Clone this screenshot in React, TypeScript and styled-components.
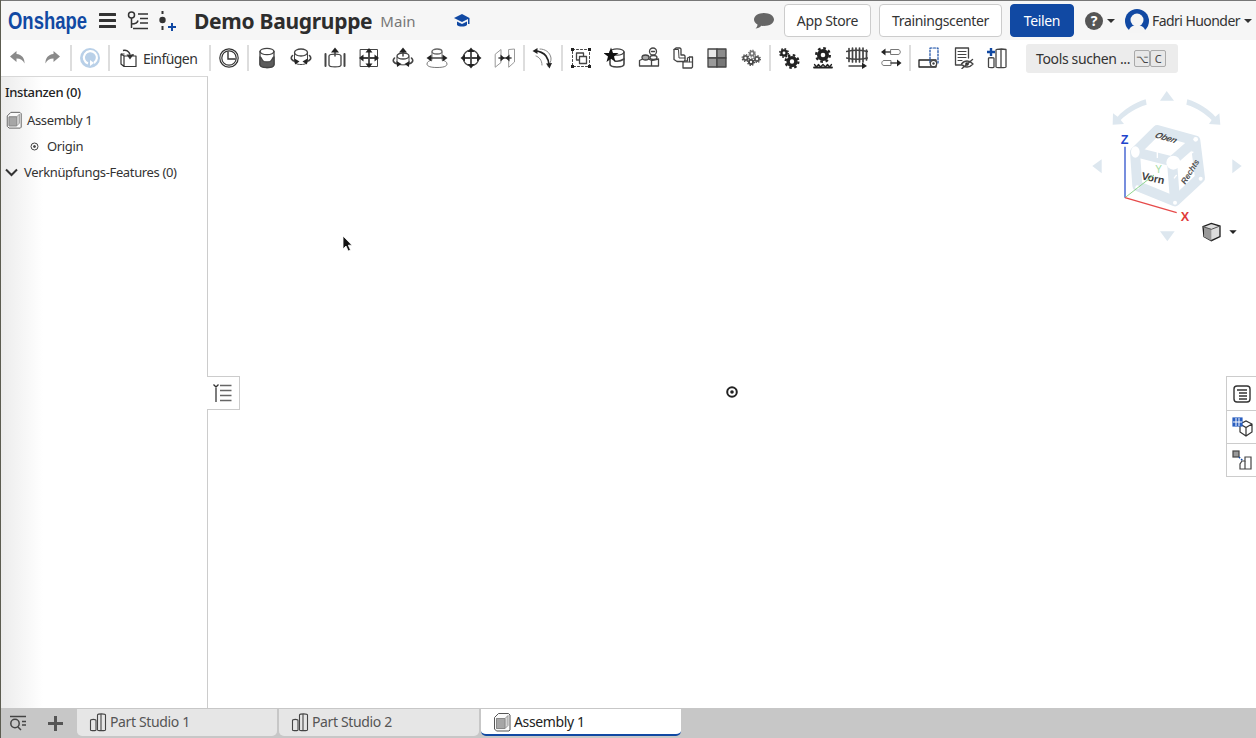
import type { ReactNode } from 'react'
import styled, { createGlobalStyle } from 'styled-components'

const BLUE = '#1149a3'
const INK = '#444'

const GlobalStyle = createGlobalStyle`
  html, body {
    margin: 0;
    padding: 0;
    height: 100%;
    overflow: hidden;
    background: #fff;
    font-family: "Noto Sans", "Open Sans", sans-serif;
    letter-spacing: -0.36px;
    color: #333;
  }
  #root { height: 100%; }
`

const Icon = ({ children }: { children: ReactNode }) => (
  <svg
    width={22}
    height={22}
    viewBox="0 0 22 22"
    fill="none"
    stroke={INK}
    strokeWidth={1.3}
    strokeLinecap="round"
    strokeLinejoin="round"
  >
    {children}
  </svg>
)

const Arrow = ({ d, tip }: { d: string; tip: string }) => (
  <>
    <path d={d} strokeWidth={1.5} />
    <polygon points={tip} fill="#222" stroke="none" />
  </>
)

// teeth are a dashed ring around a thick body ring
const Gear = ({ x, y, r, color = '#222' }: { x: number; y: number; r: number; color?: string }) => {
  const toothRadius = r * 0.85
  const dash = (2 * Math.PI * toothRadius) / 16
  return (
    <>
      <circle cx={x} cy={y} r={toothRadius} stroke={color} strokeWidth={r * 0.3} strokeLinecap="butt" strokeDasharray={`${dash} ${dash}`} />
      <circle cx={x} cy={y} r={r * 0.52} stroke={color} strokeWidth={r * 0.46} />
    </>
  )
}

const PartStudioIcon = () => (
  <svg width="20" height="20" viewBox="0 0 20 20" fill="none" stroke="#444" strokeWidth="1.1">
    <path d="M2.500 8.500c0-1.500 5.500-1.500 5.500 0V18c0 1-5.500 1-5.500 0z" />
    <path d="M9.500 3c0-1.500 8-1.500 8 0V18c0 1-8 1-8 0z" />
    <path d="M13 2v17" />
  </svg>
)

const AssemblyIcon = () => (
  <svg width="20" height="20" viewBox="0 0 20 20" fill="none" stroke="#555" strokeWidth="1">
    <path d="M2.500 5.500 6.500 1.500h10l1.500 1.500v15l-1 1H4.500l-2-2z" fill="#fafafa" />
    <path d="M4.500 6.500h8.500l3-3v10l-3 3H4.500z" fill="#d4d4d4" stroke="#999" />
    <path d="M4.500 6.500h8.500v10H4.500z" fill="#a6a6a6" stroke="#888" />
  </svg>
)

const tools: Record<string, ReactNode> = {
  fastened: (
    <Icon>
      <ellipse cx="11" cy="4.500" rx="7" ry="3.200" />
      <path d="M4 4.500v13c0 4 14 4 14 0v-13" />
      <path d="M4 10c2 .5 1.500 3.500 4 4.500 2 .6 4 .6 6 0 2.500-1 2-4 4-4.500v7.500c0 4-14 4-14 0z" fill="#5c5c5c" />
    </Icon>
  ),
  revolute: (
    <Icon>
      <ellipse cx="11" cy="5.500" rx="6.500" ry="3.500" />
      <path d="M4.500 6v8c0 2 2 3.500 6.500 3.500s6.500-1.500 6.500-3.500V6" strokeWidth="1" />
      <path d="M6 14.500C1.500 14 0 11 2.500 8.500M16 14.500c4.500-.5 6-3.500 3.500-6" strokeWidth="1.600" />
      <polygon points="4.500,11.500 9.500,14.500 5,17.500" fill="#222" stroke="none" />
      <polygon points="17.500,11.500 12.500,14.500 17,17.500" fill="#222" stroke="none" />
    </Icon>
  ),
  slider: (
    <Icon>
      <path d="M5 9c0-2.500 12-2.500 12 0v9c0 2.500-12 2.500-12 0z" />
      <Arrow d="M11 9V4" tip="11,0.500 7,5.500 15,5.500" />
      <path d="M1.500 7v12M20.500 7v12" strokeWidth="2" />
    </Icon>
  ),
  planar: (
    <Icon>
      <rect x="2.500" y="2.500" width="17" height="17" strokeWidth="1" />
      <path d="M11 4v14M4 11h14" strokeWidth="1.800" />
      <polygon points="11,1 7.500,5.500 14.500,5.500" fill="#222" stroke="none" />
      <polygon points="11,21 7.500,16.500 14.500,16.500" fill="#222" stroke="none" />
      <polygon points="1,11 5.500,7.500 5.500,14.500" fill="#222" stroke="none" />
      <polygon points="21,11 16.500,7.500 16.500,14.500" fill="#222" stroke="none" />
    </Icon>
  ),
  cylindrical: (
    <Icon>
      <ellipse cx="11" cy="9" rx="6" ry="3" />
      <path d="M5 10v6c0 2.500 12 2.500 12 0v-6" strokeWidth="1" />
      <Arrow d="M11 9V4" tip="11,0.500 7,5.500 15,5.500" />
      <path d="M6 17C1.500 16.500 0 13.500 2.500 11M16 17c4.500-.5 6-3.500 3.500-6" strokeWidth="1.600" />
      <polygon points="4.500,14 9.500,17 5,20" fill="#222" stroke="none" />
      <polygon points="17.500,14 12.500,17 17,20" fill="#222" stroke="none" />
    </Icon>
  ),
  pinSlot: (
    <Icon>
      <ellipse cx="11" cy="4.500" rx="5" ry="2.500" stroke="#666" />
      <path d="M6 5v7M16 5v7M6 13c-3 .5-5 2-5 4 0 2.500 4 3.500 10 3.500s10-1 10-3.500c0-2-2-3.500-5-4" strokeWidth="1" stroke="#777" />
      <Arrow d="M4 11h14" tip="0.500,11 5.500,7.500 5.500,14.500" />
      <polygon points="21.500,11 16.500,7.500 16.500,14.500" fill="#222" stroke="none" />
    </Icon>
  ),
  ball: (
    <Icon>
      <circle cx="11" cy="11" r="7.800" />
      <path d="M11 3v16M3 11h16" strokeWidth="1.800" />
      <polygon points="11,0.500 7.500,5 14.500,5" fill="#222" stroke="none" />
      <polygon points="11,21.500 7.500,17 14.500,17" fill="#222" stroke="none" />
      <polygon points="0.500,11 5,7.500 5,14.500" fill="#222" stroke="none" />
      <polygon points="21.500,11 17,7.500 17,14.500" fill="#222" stroke="none" />
    </Icon>
  ),
  parallel: (
    <Icon>
      <path d="M1.500 7 7 2.500v13L1.500 20zM15 2.500 20.500 2v13L15 20z" stroke="#999" strokeWidth="1" />
      <path d="M5 11h12" strokeWidth="1.600" />
      <polygon points="10.500,11 6.500,7.500 6.500,14.500" fill="#222" stroke="none" />
      <polygon points="11.500,11 15.500,7.500 15.500,14.500" fill="#222" stroke="none" />
    </Icon>
  ),
  tangent: (
    <Icon>
      <path d="M8 2c5 0 10 3 11 9 .3 3-1 6-3 8" stroke="#888" strokeWidth="1" />
      <path d="M4 9c3 1 6 4 6 9" stroke="#888" strokeWidth="1" />
      <path d="M3 4c4 0 9 2 11 5M14 9c2 3 3 6 3 9" strokeWidth="1.700" stroke="#222" />
      <polygon points="0.500,4 5.500,1 5.500,7" fill="#222" stroke="none" />
      <polygon points="17.500,21.500 14,16.500 20,16" fill="#222" stroke="none" />
    </Icon>
  ),
  group: (
    <Icon>
      <rect x="2.500" y="2.500" width="17" height="17" strokeDasharray="2 2" strokeWidth="1" />
      <rect x="6.500" y="6" width="7" height="7" />
      <rect x="9.500" y="9.500" width="7" height="7" fill="#fff" />
      <g fill="#222" stroke="none">
        <rect x="1" y="1" width="3" height="3" />
        <rect x="18" y="1" width="3" height="3" />
        <rect x="1" y="18" width="3" height="3" />
        <rect x="18" y="18" width="3" height="3" />
      </g>
    </Icon>
  ),
  replicate: (
    <Icon>
      <ellipse cx="13" cy="5" rx="7" ry="3.200" />
      <path d="M6 8v9c0 4 14 4 14 0V5" strokeWidth="1.600" />
      <path d="M11 14c3 .5 6 0 9-2" strokeWidth="1.600" />
      <polygon points="7,0.500 9,6 14.500,6 10,9.500 11.500,15 7,11.800 2.500,15 4,9.500 -0.500,6 5,6" fill="#111" stroke="none" />
    </Icon>
  ),
  blocks: (
    <Icon>
      <circle cx="15" cy="4.500" r="3.500" />
      <path d="M13.500 4.500h3" />
      <path d="M1.500 13.500 8 10.500l5.500 3V19H1.500zM13.500 13.500l7-1.500V19h-7z" />
      <ellipse cx="7.500" cy="10.500" rx="3.500" ry="2.500" fill="#aaa" />
      <ellipse cx="15.500" cy="10.500" rx="3.500" ry="2" fill="#fff" />
    </Icon>
  ),
  lshapes: (
    <Icon>
      <path d="M2 2.500 4 1h4l1 1v6h3l1 1v4l-1 1.500H5l-3-2z" />
      <path d="M2 2.500h4.500l.5 8.500h6" strokeWidth="1" />
      <path d="M11 15l2-1h2.500v-3l2-1h3v10l-1 1H11z" fill="#fff" />
      <path d="M11 15h6.500v-5M17.500 15l3 0" strokeWidth="1" />
    </Icon>
  ),
  grid: (
    <Icon>
      <rect x="2" y="2" width="9" height="9" fill="#e8e8e8" />
      <rect x="11" y="2" width="9" height="9" fill="#8c8c8c" />
      <rect x="2" y="11" width="9" height="9" fill="#9a9a9a" />
      <rect x="11" y="11" width="9" height="9" fill="#777" />
    </Icon>
  ),
  cluster: (
    <Icon>
      <Gear x={5.500} y={11} r={4} color="#555" />
      <Gear x={12} y={6.500} r={4} color="#777" />
      <Gear x={17} y={12} r={4} color="#555" />
      <Gear x={11} y={15} r={4} color="#444" />
    </Icon>
  ),
  gears: (
    <Icon>
      <Gear x={6} y={6} r={5} />
      <Gear x={14} y={14.500} r={7.500} />
    </Icon>
  ),
  gearFloor: (
    <Icon>
      <Gear x={11} y={8} r={8} />
      <path d="M2 20.500h18" strokeWidth="1.800" stroke="#222" />
      <path d="M2.500 17.500l2 2.500 2-2.500 2 2.500 2.500-2.500 2.500 2.500 2-2.500 2 2.500 2-2.500" strokeWidth="1.300" stroke="#222" />
    </Icon>
  ),
  rack: (
    <Icon>
      <path d="M3 1.500v13M6.500 1v14M10 1v14M13.500 1v14M17 1v14M20.500 3v10" strokeWidth="1.700" />
      <path d="M.5 4.500c6-1.500 15-1.500 21 0M.5 11c6 1.500 15 1.500 21 0" strokeWidth="1.500" />
      <Arrow d="M3 19h14" tip="21,19 16,15.500 16,22" />
    </Icon>
  ),
  pistons: (
    <Icon>
      <path d="M11 2.500h7c3 0 3 5 0 5h-7z" stroke="#777" strokeWidth="1" />
      <path d="M4 13.500h7v5H4c-3 0-3-5 0-5z" stroke="#777" strokeWidth="1" />
      <Arrow d="M4 5h6" tip="1,5 5.500,1.500 5.500,8.500" />
      <Arrow d="M11 16h7" tip="21.500,16 17,12.500 17,19.500" />
    </Icon>
  ),
  offset: (
    <Icon>
      <rect x="1" y="13" width="17" height="7" stroke="#222" />
      <rect x="12" y="1" width="8" height="15" stroke={BLUE} strokeDasharray="2 1.500" strokeWidth="1.200" />
      <circle cx="15.500" cy="16.500" r="3.200" fill="#fff" stroke="#444" />
      <circle cx="15.500" cy="16.500" r="1.200" fill="#444" stroke="none" />
    </Icon>
  ),
  docEye: (
    <Icon>
      <path d="M3.500 1h13v10M3.500 1v17h6" />
      <path d="M6 4.500h8M6 7.500h8M6 10.500h8M6 13.500h4" strokeWidth="1" />
      <path d="M9.500 17c3-4 8-4 11.500 0-3.500 4-8.500 4-11.500 0z" fill="#fff" />
      <circle cx="15" cy="17" r="1.800" fill="#222" stroke="none" />
      <path d="M10 21.500 20.500 12.500" strokeWidth="1.400" />
    </Icon>
  ),
  newStudio: (
    <Icon>
      <path d="M5 1v8M1 5h8" stroke={BLUE} strokeWidth="2.400" strokeLinecap="butt" />
      <path d="M2.500 11.500c0-1 5.500-1 5.500 0V20c0 .8-5.500.8-5.500 0zM10 3c0-1 4.500-1 5.500-1l4.500.5V20c0 .8-10 .8-10 0zM15 2.500V20" />
    </Icon>
  ),
}

const toolGroups = [
  ['fastened', 'revolute', 'slider', 'planar', 'cylindrical', 'pinSlot', 'ball', 'parallel'],
  ['tangent'],
  ['group', 'replicate', 'blocks', 'lshapes', 'grid', 'cluster'],
  ['gears', 'gearFloor', 'rack', 'pistons'],
  ['offset', 'docEye', 'newStudio'],
]

const tabs = [
  { name: 'Part Studio 1', active: false },
  { name: 'Part Studio 2', active: false },
  { name: 'Assembly 1', active: true },
]

export default function App() {
  return (
    <>
      <GlobalStyle />
      <Page>
        <TopBar>
          <LogoSlot>
            <Logo>Onshape</Logo>
          </LogoSlot>
          <IconSlot $width={28}>
            <svg width="17" height="15" viewBox="0 0 17 15" fill="#333">
              <rect width="17" height="3" rx="0.500" />
              <rect y="6" width="17" height="3" rx="0.500" />
              <rect y="12" width="17" height="3" rx="0.500" />
            </svg>
          </IconSlot>
          <IconSlot $width={33}>
            <svg width="22" height="20" viewBox="0 0 22 20" fill="none" stroke="#333" strokeWidth="1.500">
              <circle cx="4.500" cy="4" r="3" />
              <path d="M4.500 7v10M4.500 13c4 0 6-1 6.500-3.500" />
              <path d="M11 3h10M13 7.500h8M13 12h8M6 17.500h15" />
            </svg>
          </IconSlot>
          <IconSlot $width={26}>
            <svg width="20" height="20" viewBox="0 0 20 20" fill="#333">
              <rect x="4.500" y="0" width="2" height="3" />
              <circle cx="5.500" cy="9" r="3.200" />
              <rect x="4.500" y="15" width="2" height="4" />
              <path d="M11 15h3v-3h2v3h3v2h-3v3h-2v-3h-3z" fill={BLUE} />
            </svg>
          </IconSlot>
          <Title>Demo Baugruppe</Title>
          <Branch>Main</Branch>
          <IconSlot $width={16} $left={38}>
            <svg width="16" height="14" viewBox="0 0 16 14" fill={BLUE}>
              <path d="M8 0 0 4l8 4 6-3v5h1.500V4z" />
              <path d="M3 7.500V11c2 2 8 2 10 0V7.500L8 10z" />
            </svg>
          </IconSlot>
          <RightGroup>
            <ChatIcon width="20" height="16" viewBox="0 0 20 16" fill="#666">
              <path d="M10 0c5.500 0 10 2.800 10 6.500S15.500 13 10 13c-1 0-2-.1-2.800-.3C6 14.500 3.500 15.500 1.500 15.500c1.200-1 2-2.300 2-4C1.300 10.300 0 8.500 0 6.500 0 2.800 4.500 0 10 0z" />
            </ChatIcon>
            <HeaderButton>App Store</HeaderButton>
            <HeaderButton>Trainingscenter</HeaderButton>
            <ShareButton>Teilen</ShareButton>
            <HelpMenu>
              <svg width="18" height="18" viewBox="0 0 18 18">
                <circle cx="9" cy="9" r="9" fill="#555" />
                <text x="9" y="14" textAnchor="middle" fontSize="14" fontWeight="700" fill="#fff" fontFamily="Noto Sans">?</text>
              </svg>
              <Caret />
            </HelpMenu>
            <UserMenu>
              <svg width="24" height="24" viewBox="0 0 24 24">
                <circle cx="12" cy="12" r="12" fill={BLUE} />
                <circle cx="12" cy="11" r="6.500" fill="#f5f5f5" />
                <path d="M3 24c1-6 5-8 9-8s8 2 9 8z" fill="#f5f5f5" />
              </svg>
              <UserName>Fadri Huonder</UserName>
              <Caret />
            </UserMenu>
          </RightGroup>
        </TopBar>

        <Toolbar>
          <ToolButton>
            <svg width="16" height="14" viewBox="0 0 16 14" fill="#8a8a8a">
              <path d="M6.500 0 0 5.500 6.500 11V7.500c4 0 6.500 1.500 8 5 .3-5-2.500-9-8-9.500z" />
            </svg>
          </ToolButton>
          <ToolButton>
            <svg width="16" height="14" viewBox="0 0 16 14" fill="#8a8a8a">
              <path d="M9.500 0 16 5.500 9.500 11V7.500c-4 0-6.500 1.500-8 5-.3-5 2.500-9 8-9.500z" />
            </svg>
          </ToolButton>
          <Separator />
          <ToolButton>
            <svg width="22" height="22" viewBox="0 0 22 22" fill="none">
              <circle cx="11" cy="11" r="10" fill="#b9d0e8" />
              <path d="M15 16a6.500 6.500 0 1 0-6 .6" stroke="#fff" strokeWidth="2.200" />
              <path d="M11 13v6l4-3z" fill="#fff" />
            </svg>
          </ToolButton>
          <Separator />
          <InsertButton>
            <svg width="17" height="18" viewBox="0 0 17 18" fill="none" stroke="#333" strokeWidth="1.200" strokeLinejoin="round">
              <path d="M1 5l3 2v10.500L1 15z" />
              <path d="M4 7h12v10.500H4" />
              <path d="M1 5h3.500M13 7V5" />
              <path d="M3 1.500c3-1 6 .5 7 4" strokeWidth="1.500" />
              <polygon points="6.500,5.500 13.500,5.500 10,10.500" fill="#333" stroke="none" />
            </svg>
            <InsertLabel>Einfügen</InsertLabel>
          </InsertButton>
          <Separator />
          <ToolButton>
            <svg width="20" height="20" viewBox="0 0 20 20" fill="none" stroke="#333" strokeWidth="1.200">
              <circle cx="10" cy="10" r="9.200" />
              <circle cx="10" cy="10" r="7.200" />
              <path d="M9 3.500v7.500h7.500" strokeWidth="1.400" />
            </svg>
          </ToolButton>
          <Separator />
          {toolGroups.map((group, index) => (
            <ToolGroup key={group[0]}>
              {group.map(name => (
                <ToolButton key={name}>{tools[name]}</ToolButton>
              ))}
              {index < toolGroups.length - 1 && <Separator />}
            </ToolGroup>
          ))}
          <ToolSearch>
            Tools suchen ...
            <KeyCap>⌥</KeyCap>
            <KeyCap>C</KeyCap>
          </ToolSearch>
        </Toolbar>

        <Workspace>
          <Sidebar>
            <SidebarHeading>Instanzen (0)</SidebarHeading>
            <TreeRow>
              <AssemblySmall>
                <AssemblyIcon />
              </AssemblySmall>
              Assembly 1
            </TreeRow>
            <TreeRow $indent={29}>
              <svg width="9" height="9" viewBox="0 0 9 9" fill="none" stroke="#444">
                <circle cx="4.500" cy="4.500" r="3.500" />
                <circle cx="4.500" cy="4.500" r="1" fill="#444" />
              </svg>
              <OriginLabel>Origin</OriginLabel>
            </TreeRow>
            <TreeRow>
              <svg width="13" height="9" viewBox="0 0 13 9" fill="none" stroke="#333" strokeWidth="2">
                <path d="M1 1.500 6.500 7 12 1.500" />
              </svg>
              <FeatureLabel>Verknüpfungs-Features (0)</FeatureLabel>
            </TreeRow>
          </Sidebar>

          <Canvas>
            <ListHandle>
              <svg width="20" height="20" viewBox="0 0 20 20" fill="none" stroke="#666" strokeWidth="1.700">
                <path d="M3 5v14" />
                <path d="M.5 1.500 3 4l2.500-2.500" strokeWidth="1.300" stroke="#333" />
                <path d="M7 2.500h11.500M7 7.500h11.500M7 12.500h11.500M7 17.500h11.500" />
              </svg>
            </ListHandle>

            <OriginMark>
              <svg width="12" height="12" viewBox="0 0 12 12" fill="none" stroke="#222" strokeWidth="2">
                <circle cx="6" cy="6" r="4.800" />
                <circle cx="6" cy="6" r="1.800" fill="#222" stroke="none" />
              </svg>
            </OriginMark>

            <Pointer>
              <svg width="12" height="18" viewBox="0 0 12 18">
                <path d="M1 1v13l3-3 2.200 5 2.300-1-2.200-4.800H10z" fill="#111" stroke="#fff" strokeWidth="0.800" />
              </svg>
            </Pointer>

            <ViewCube>
              <svg width="176" height="170" viewBox="0 0 528 510" fontFamily="Liberation Sans, sans-serif">
                <g fill="#dde7ef" stroke="none">
                  <polygon points="260,33 240,62 282,62" />
                  <polygon points="37,258 65,238 65,280" />
                  <polygon points="485,258 457,238 457,280" />
                  <polygon points="262,484 240,454 284,454" />
                  <path d="M197 58c-38 12-66 32-84 52l-14-10-1 34 34-2-10-12c18-18 44-36 78-46z" />
                  <path d="M322 58c38 12 66 32 84 52l12-10 3 34-34-2 8-12c-18-18-42-36-76-46z" />
                </g>
                <g fill="none" stroke="#dde7ef" strokeWidth="30" strokeLinejoin="round">
                  <path d="M232 150 346 182 360 294 285 364 172 318 165 216z" />
                  <path d="M165 216 276 244 346 182M276 244 285 364" />
                </g>
                <g fill="#fff" stroke="none">
                  <ellipse cx="166" cy="216" rx="13" ry="17" />
                  <circle cx="280" cy="248" r="21" />
                  <circle cx="347" cy="178" r="7" />
                  <circle cx="172" cy="322" r="6" />
                  <circle cx="285" cy="368" r="6" />
                  <circle cx="362" cy="296" r="6" />
                </g>
                <g stroke="#fff" strokeWidth="4">
                  <path d="M232 208v26M290 285l-8 10M340 215l-10 8" />
                </g>
                <text transform="translate(222 172) rotate(16) skewX(-20)" fontSize="26" fontWeight="700" fill="#444" fontStyle="italic">Oben</text>
                <text transform="translate(183 298) rotate(12)" fontSize="32" fontWeight="700" fill="#3d3d3d">Vorn</text>
                <text transform="translate(316 314) rotate(-58)" fontSize="25" fontWeight="700" fill="#555" fontStyle="italic">Rechts</text>
                <path d="M135 353V200" stroke="#3355cc" strokeWidth="4" />
                <path d="M135 353 222 285" stroke="#8fd58f" strokeWidth="3" />
                <path d="M135 353 290 398" stroke="#e64a4a" strokeWidth="4" />
                <text x="122" y="192" fontSize="38" fontWeight="700" fill="#2244cc">Z</text>
                <text x="226" y="278" fontSize="30" fill="#a3dba3">Y</text>
                <text x="302" y="422" fontSize="38" fontWeight="700" fill="#e03a3a">X</text>
                <path d="M369 440 394 430 420 438V470L394 482 372 470z" fill="#ddd" stroke="#222" strokeWidth="4" />
                <path d="M394 447V482L372 470V440z" fill="#999" stroke="none" />
                <path d="M369 440 394 448 420 438" fill="none" stroke="#555" strokeWidth="3" />
                <polygon points="448,451 470,451 459,462" fill="#222" />
              </svg>
            </ViewCube>

            <SidePanel>
              <SideCell>
                <svg width="18" height="18" viewBox="0 0 18 18" fill="none" stroke="#333" strokeWidth="1.400">
                  <rect x="1" y="1" width="16" height="16" rx="3" />
                  <path d="M4 5h10M6 8h8M6 11h8M6 14h8" strokeWidth="1.600" />
                </svg>
              </SideCell>
              <SideCell>
                <svg width="22" height="22" viewBox="0 0 22 22" fill="none" stroke="#333" strokeWidth="1.200">
                  <path d="M9 8l6-3 6 3v8l-6 4-6-4zM9 8l6 3.500L21 8M15 11.500V20" />
                  <rect x="2" y="2" width="9" height="8" fill="#2a5fc0" stroke="#2a5fc0" />
                  <path d="M5 2v8M8 2v8M2 6h9" stroke="#fff" strokeWidth="1" />
                </svg>
              </SideCell>
              <SideCell>
                <svg width="22" height="22" viewBox="0 0 22 22" fill="none" stroke="#444" strokeWidth="1.200">
                  <rect x="2" y="2" width="6" height="6" fill="#999" />
                  <path d="M8 8l4 4" stroke={BLUE} strokeDasharray="1.500 1.500" strokeWidth="1.600" />
                  <path d="M11 12h3V8h6v12H9v-5z" fill="#fff" />
                  <path d="M14 12v8" />
                </svg>
              </SideCell>
            </SidePanel>
          </Canvas>
        </Workspace>

        <BottomBar>
          <BottomIcon $width={34}>
            <svg width="18" height="16" viewBox="0 0 18 16" fill="none" stroke="#444" strokeWidth="1.500">
              <path d="M1 1.500h16" />
              <circle cx="6" cy="8.500" r="4.200" />
              <path d="M9 12l3 3" />
              <path d="M13 6.500h4M13 10h4" />
            </svg>
          </BottomIcon>
          <BottomIcon $width={40}>
            <svg width="15" height="15" viewBox="0 0 15 15" fill="#555">
              <path d="M6 0h3v6h6v3H9v6H6V9H0V6h6z" />
            </svg>
          </BottomIcon>
          <TabList>
            {tabs.map(({ name, active }) => (
              <Tab key={name} $active={active}>
                {active ? <AssemblyIcon /> : <PartStudioIcon />}
                {name}
              </Tab>
            ))}
          </TabList>
        </BottomBar>
      </Page>
    </>
  )
}

const Page = styled.div`
  height: 738px;
  width: 1256px;
  box-sizing: border-box;
  display: flex;
  flex-direction: column;
  overflow: hidden;
  border-left: 1px solid #5c5c50;
`

const TopBar = styled.header`
  height: 39px;
  flex: none;
  display: flex;
  align-items: center;
  padding-left: 7px;
  background: #f6f6f6;
  border-top: 1px solid #777;
`

const LogoSlot = styled.div`
  width: 85px;
  flex: none;
`

const Logo = styled.div`
  font-family: "Liberation Sans", sans-serif;
  font-size: 24px;
  font-weight: 700;
  letter-spacing: 0;
  color: ${BLUE};
  transform: scaleX(0.77);
  transform-origin: left center;
`

const IconSlot = styled.div<{ $width: number; $left?: number }>`
  width: ${props => props.$width}px;
  margin-left: ${props => props.$left ?? 0}px;
  display: flex;
  justify-content: center;
  align-items: center;
`

const Title = styled.h1`
  margin: 0 0 0 14px;
  font-size: 21px;
  font-weight: 700;
  letter-spacing: -0.3px;
  color: #2d2d2d;
`

const Branch = styled.span`
  margin-left: 8px;
  font-size: 15px;
  letter-spacing: 0;
  color: #777;
`

const RightGroup = styled.div`
  margin-left: auto;
  display: flex;
  align-items: center;
  gap: 8px;
  padding-right: 4px;
`

const ChatIcon = styled.svg`
  margin-right: 2px;
`

const HeaderButton = styled.button`
  height: 33px;
  padding: 0 12px;
  margin: 0;
  font: 14px "Noto Sans", sans-serif;
  letter-spacing: -0.36px;
  color: #333;
  background: #fff;
  border: 1px solid #ccc;
  border-radius: 4px;
`

const ShareButton = styled(HeaderButton)`
  width: 64px;
  color: #fff;
  background: ${BLUE};
  border-color: ${BLUE};
`

const HelpMenu = styled.div`
  margin-left: 3px;
  display: flex;
  align-items: center;
  gap: 4px;
`

const UserMenu = styled.div`
  margin-left: 2px;
  display: flex;
  align-items: center;
`

const UserName = styled.span`
  margin: 0 4px 0 3px;
  font-size: 14px;
  letter-spacing: -0.55px;
  color: #333;
`

const Caret = styled.span`
  width: 0;
  height: 0;
  border-left: 4px solid transparent;
  border-right: 4px solid transparent;
  border-top: 4px solid #333;
`

const Toolbar = styled.nav`
  height: 36px;
  flex: none;
  display: flex;
  align-items: center;
  background: #fff;
`

const ToolGroup = styled.div`
  display: flex;
  align-items: center;
`

const ToolButton = styled.div`
  width: 34px;
  height: 32px;
  flex: none;
  display: flex;
  align-items: center;
  justify-content: center;
`

const Separator = styled.div`
  width: 2px;
  height: 26px;
  margin: 0 1px;
  flex: none;
  background: #ddd;
`

const InsertButton = styled.div`
  width: 97px;
  box-sizing: border-box;
  padding-left: 9px;
  flex: none;
  display: flex;
  align-items: center;
  gap: 6px;
  font-size: 14px;
  color: #333;
`

const InsertLabel = styled.span`
  letter-spacing: -0.55px;
`

const ToolSearch = styled.div`
  width: 152px;
  height: 29px;
  box-sizing: border-box;
  margin-left: 12px;
  padding-left: 10px;
  display: flex;
  align-items: center;
  font-size: 14px;
  color: #333;
  background: #ececec;
  border-radius: 3px;
`

const KeyCap = styled.span`
  width: 16px;
  height: 17px;
  box-sizing: border-box;
  display: flex;
  align-items: center;
  justify-content: center;
  font-size: 11px;
  color: #444;
  border: 1px solid #aaa;
  border-radius: 2px;
  background: #e8e8e8;

  &:first-of-type {
    margin-left: 4px;
  }
`

const Workspace = styled.main`
  flex: 1;
  min-height: 0;
  display: flex;
`

const Sidebar = styled.aside`
  width: 207px;
  flex: none;
  box-sizing: border-box;
  padding-top: 2px;
  background: linear-gradient(to right, #ececec, #ffffff 42px);
  border-top: 1px solid #d8d8d8;
  border-right: 1px solid #ccc;
`

const SidebarHeading = styled.div`
  height: 26px;
  margin-bottom: 2px;
  padding-left: 4px;
  display: flex;
  align-items: center;
  font-size: 13px;
  font-weight: 500;
  color: #222;
`

const TreeRow = styled.div<{ $indent?: number }>`
  height: 26px;
  padding-left: ${props => props.$indent ?? 4}px;
  display: flex;
  align-items: center;
  font-size: 13px;
  color: #333;
`

const AssemblySmall = styled.span`
  width: 22px;
  display: flex;
  align-items: center;

  svg {
    width: 18px;
    height: 18px;
  }
`

const OriginLabel = styled.span`
  margin-left: 8px;
`

const FeatureLabel = styled.span`
  margin-left: 6px;
`

const Canvas = styled.section`
  position: relative;
  flex: 1;
  background: #fff;
`

const ListHandle = styled.div`
  position: absolute;
  left: -1px;
  top: 300px;
  width: 33px;
  height: 34px;
  box-sizing: border-box;
  display: flex;
  align-items: center;
  justify-content: center;
  background: #fff;
  border: 1px solid #ccc;
  border-left: none;
`

const OriginMark = styled.div`
  position: absolute;
  left: 518px;
  top: 310px;
  line-height: 0;
`

const Pointer = styled.div`
  position: absolute;
  left: 134px;
  top: 159px;
  line-height: 0;
`

const ViewCube = styled.div`
  position: absolute;
  right: 0;
  top: 4px;
  line-height: 0;
`

const SidePanel = styled.div`
  position: absolute;
  right: 0;
  top: 300px;
  width: 30px;
  box-sizing: border-box;
  background: #fff;
  border: 1px solid #ccc;
  border-right: none;
`

const SideCell = styled.div`
  height: 33px;
  box-sizing: border-box;
  display: flex;
  align-items: center;
  justify-content: center;

  & + & {
    border-top: 1px solid #ccc;
  }
`

const BottomBar = styled.footer`
  height: 30px;
  flex: none;
  display: flex;
  background: #c7c7c7;
`

const BottomIcon = styled.div<{ $width: number }>`
  width: ${props => props.$width}px;
  flex: none;
  display: flex;
  align-items: center;
  justify-content: center;
`

const TabList = styled.div`
  margin: 1px 0 0 2px;
  display: flex;
  gap: 2px;
`

const Tab = styled.div<{ $active: boolean }>`
  width: 200px;
  height: 27px;
  box-sizing: border-box;
  padding-left: 11px;
  display: flex;
  align-items: center;
  gap: 2px;
  font-size: 14px;
  color: ${props => (props.$active ? '#222' : '#555')};
  background: ${props => (props.$active ? '#fff' : '#e6e6e6')};
  border-bottom: 2px solid ${props => (props.$active ? BLUE : '#e6e6e6')};
  border-radius: 0 0 5px 5px;
`
